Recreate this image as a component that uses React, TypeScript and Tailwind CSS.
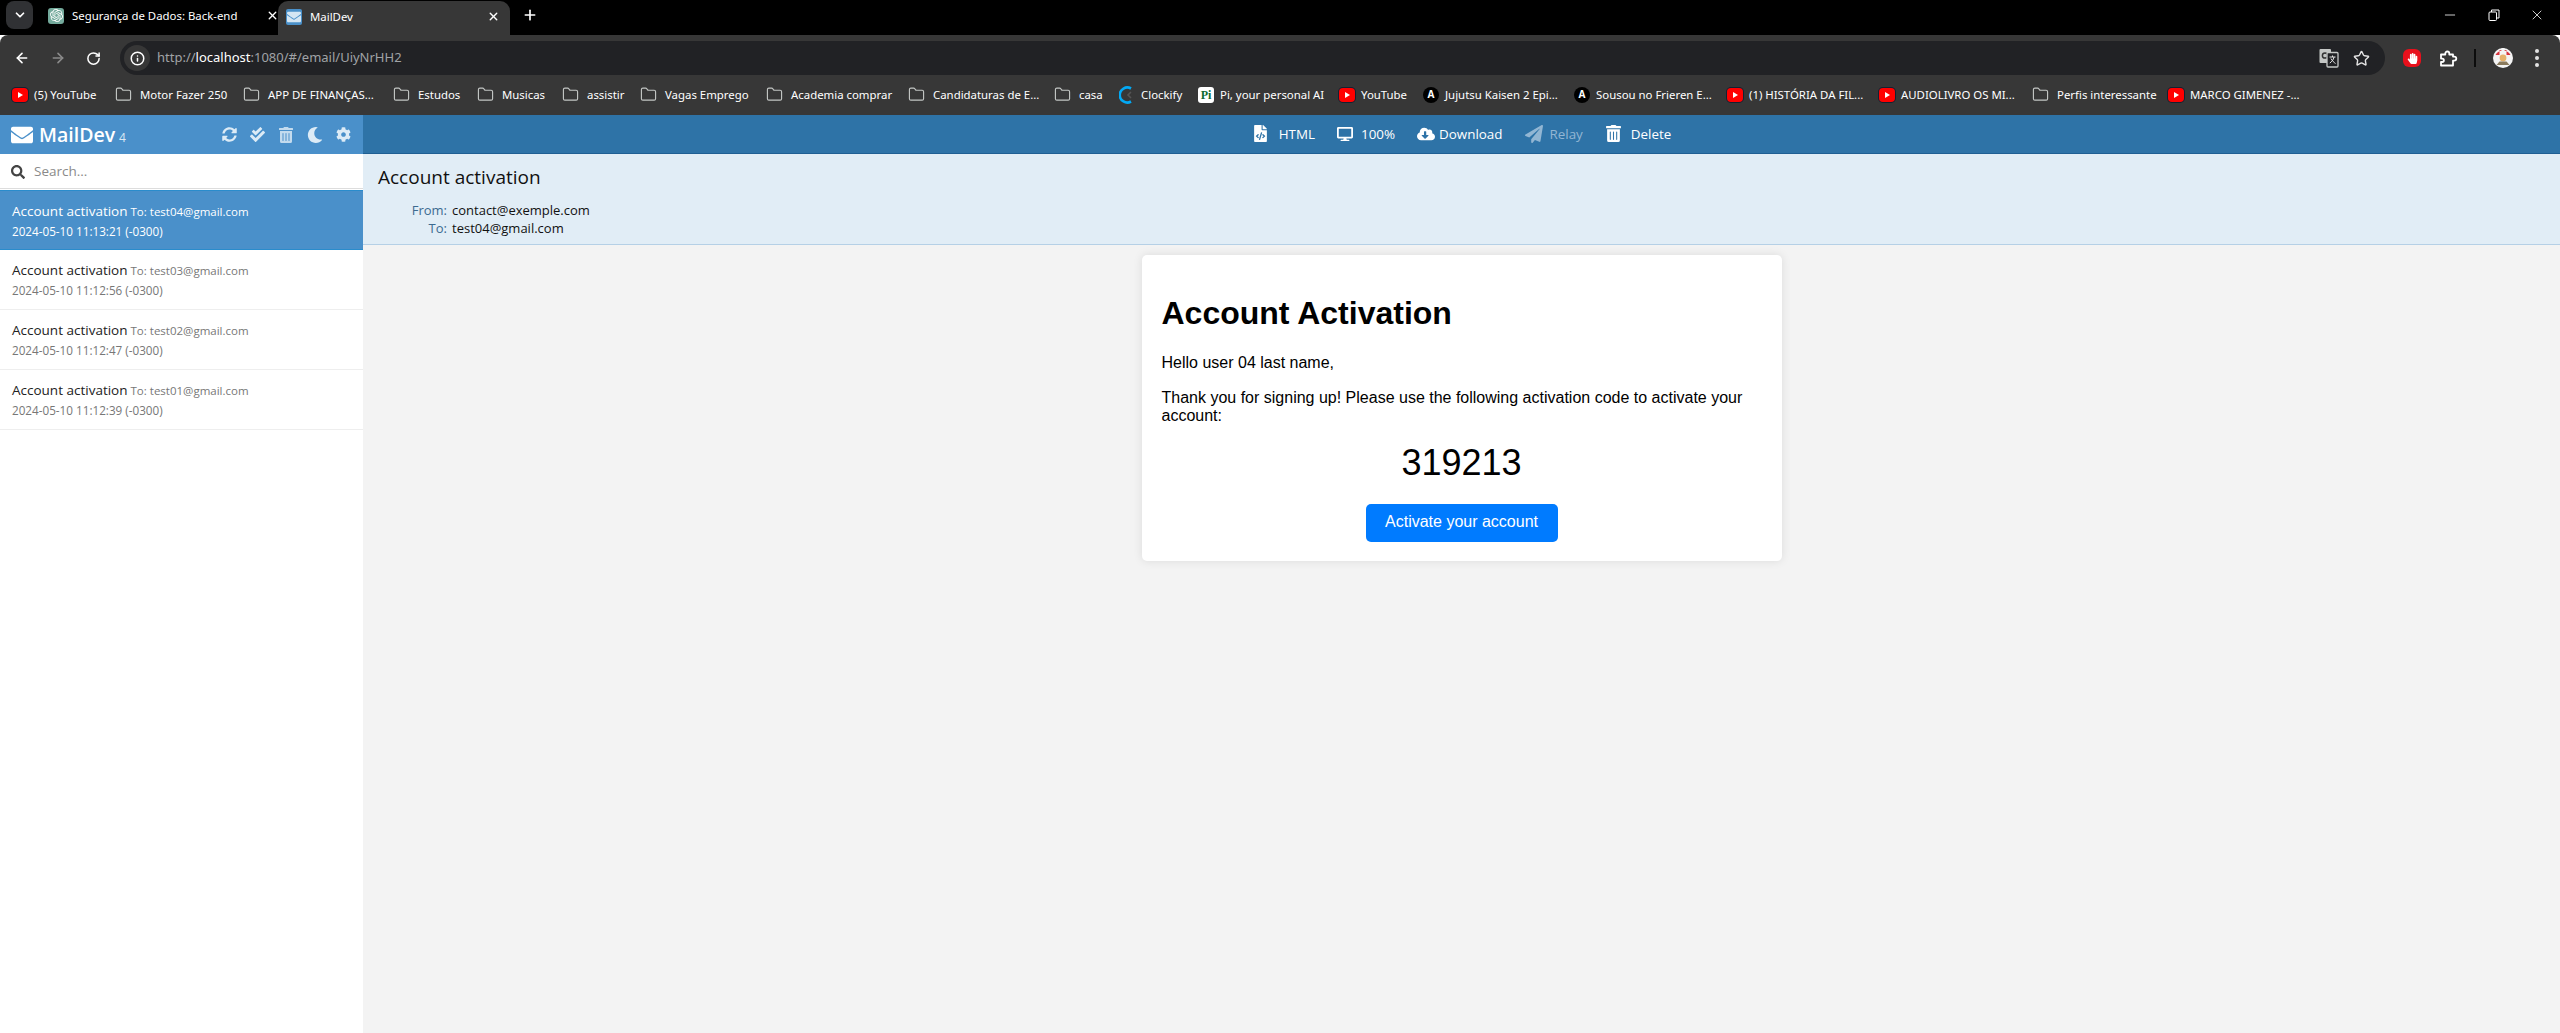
import React from "react";
import { FaEnvelope, FaSyncAlt, FaCheckDouble, FaTrashAlt, FaMoon, FaCog, FaSearch, FaFileCode, FaDesktop, FaCloudDownloadAlt, FaPaperPlane, FaHandPaper } from "react-icons/fa";
import { SiOpenai } from "react-icons/si";
import { ChevronDown, X, Plus, ArrowLeft, ArrowRight, RotateCw, Info, Minus, Folder, Star } from "lucide-react";

const YT = () => (
  <span className="flex h-[14px] w-[16px] shrink-0 items-center justify-center rounded-[4px] bg-[#f00] ring-1 ring-[#123]">
    <svg width="6" height="6" viewBox="0 0 6 6"><path d="M1 0 L6 3 L1 6Z" fill="#fff" /></svg>
  </span>
);
const Fold = () => <Folder size={17} strokeWidth={1.6} className="mr-[2px] shrink-0 text-[#c4c7c5]" />;
const Anime = () => (
  <span className="flex h-[16px] w-[16px] shrink-0 items-center justify-center rounded-full bg-black text-[10px] font-bold text-white">A</span>
);
const Clock = () => (
  <svg width="16" height="18" viewBox="0 0 16 18" className="shrink-0">
    <path d="M12 2.5 A7.5 7.5 0 1 0 12 15.5" fill="none" stroke="#03a9f4" strokeWidth="2.6" />
    <path d="M12 6 L9 9 L12 12" fill="none" stroke="#555" strokeWidth="1.6" />
  </svg>
);
const Pi = () => (
  <span className="flex h-[16px] w-[16px] shrink-0 items-center justify-center rounded-[3px] bg-white font-['Liberation_Serif',serif] text-[12px] font-bold text-[#0d6b2f]">Pi</span>
);

const marks = [
  { i: <YT />, t: "(5) YouTube", w: "w-[103px]" },
  { i: <Fold />, t: "Motor Fazer 250", w: "w-[128px]" },
  { i: <Fold />, t: "APP DE FINANÇAS...", w: "w-[150px]" },
  { i: <Fold />, t: "Estudos", w: "w-[84px]" },
  { i: <Fold />, t: "Musicas", w: "w-[85px]" },
  { i: <Fold />, t: "assistir", w: "w-[78px]" },
  { i: <Fold />, t: "Vagas Emprego", w: "w-[126px]" },
  { i: <Fold />, t: "Academia comprar", w: "w-[142px]" },
  { i: <Fold />, t: "Candidaturas de E...", w: "w-[146px]" },
  { i: <Fold />, t: "casa", w: "w-[65px]" },
  { i: <Clock />, t: "Clockify", w: "w-[79px]" },
  { i: <Pi />, t: "Pi, your personal AI", w: "w-[141px]" },
  { i: <YT />, t: "YouTube", w: "w-[84px]" },
  { i: <Anime />, t: "Jujutsu Kaisen 2 Epi...", w: "w-[151px]" },
  { i: <Anime />, t: "Sousou no Frieren E...", w: "w-[153px]" },
  { i: <YT />, t: "(1) HISTÓRIA DA FIL...", w: "w-[152px]" },
  { i: <YT />, t: "AUDIOLIVRO OS MI...", w: "w-[153px]" },
  { i: <Fold />, t: "Perfis interessante", w: "w-[136px]" },
  { i: <YT />, t: "MARCO GIMENEZ -...", w: "w-[140px]" },
];

const emails = [
  { to: "test04@gmail.com", d: "2024-05-10 11:13:21 (-0300)", sel: true },
  { to: "test03@gmail.com", d: "2024-05-10 11:12:56 (-0300)", sel: false },
  { to: "test02@gmail.com", d: "2024-05-10 11:12:47 (-0300)", sel: false },
  { to: "test01@gmail.com", d: "2024-05-10 11:12:39 (-0300)", sel: false },
];

function Chrome() {
  return (
    <div className="shrink-0 font-['Noto_Sans',sans-serif] text-white">
      <div className="flex h-[35px] items-center bg-black">
        <div className="mb-[6px] ml-[6px] flex h-[28px] w-[27px] items-center justify-center rounded-[8px] bg-[#303134]">
          <ChevronDown size={14} strokeWidth={3} />
        </div>
        <div className="mb-[3px] ml-[15px] flex w-[230px] items-center">
          <span className="flex h-[16px] w-[16px] items-center justify-center rounded-[3px] bg-[#74aa9c]"><SiOpenai size={13} className="text-white" /></span>
          <span className="ml-[8px] text-[11.4px]">Segurança de Dados: Back-end</span>
          <X size={13} strokeWidth={2.5} className="ml-auto mr-[-1px]" />
        </div>
        <div className="flex h-[34px] w-[232px] items-center self-end rounded-t-[10px] bg-[#373737] pb-[3px] pl-[8px] pr-[10px]">
          <span className="flex h-[16px] w-[16px] items-center justify-center rounded-[2px] bg-[#4a90c9]"><FaEnvelope size={14} className="text-[#d5e6f3]" /></span>
          <span className="ml-[8px] text-[11.4px]">MailDev</span>
          <X size={13} strokeWidth={2.5} className="ml-auto" />
        </div>
        <Plus size={16} strokeWidth={2.5} className="mb-[5px] ml-[12px]" />
        <div className="mb-[5px] ml-auto flex items-center">
          <Minus size={16} strokeWidth={1.2} className="mr-[30px]" />
          <svg width="12" height="12" viewBox="0 0 12 12" className="mr-[29px]" fill="none" stroke="#fff"><rect x="1" y="3" width="7.5" height="8.5" rx="1" /><path d="M3.5 3 V1 H11 V9 H8.5" /></svg>
          <X size={16} strokeWidth={1.2} className="mr-[15px]" />
        </div>
      </div>
      <div className="flex h-[40px] rounded-t-[8px] bg-[#373737]">
        <div className="flex w-[120px] items-center pl-[14px] pt-[6px]">
          <ArrowLeft size={16} strokeWidth={2.4} />
          <ArrowRight size={16} strokeWidth={2.4} className="ml-[20px] text-[#8b8b8b]" />
          <RotateCw size={15} strokeWidth={2.4} className="ml-[20px]" />
        </div>
        <div className="mt-[6px] flex h-[34px] w-[2265px] items-center rounded-full bg-[#212225] pl-[4px] pr-[15px]">
          <span className="flex h-[26px] w-[26px] items-center justify-center rounded-full bg-[#373737]"><Info size={15} strokeWidth={2.4} /></span>
          <span className="ml-[7px] text-[13px] text-[#a0a3a6]">http://<span className="text-white">localhost</span>:1080/#/email/UiyNrHH2</span>
          <svg width="20" height="20" viewBox="0 0 20 20" className="ml-auto">
            <rect x="0.5" y="1" width="11.5" height="14" rx="1" fill="#c4c7c5" />
            <circle cx="6" cy="7.5" r="2.6" fill="none" stroke="#333" strokeWidth="1.5" />
            <rect x="8" y="4.5" width="11" height="14.5" rx="1" fill="#212225" stroke="#c4c7c5" strokeWidth="1.3" />
            <path d="M10.5 9 H16.5 M13.5 7.5 V9 M15 9 C14.5 12 12.5 14 10.8 15 M12 10.5 C13 12.5 15 14.5 16.5 15.5" stroke="#e3e3e3" strokeWidth="1" fill="none" />
          </svg>
          <Star size={17} strokeWidth={2} className="ml-[14px] text-[#e3e3e3]" />
        </div>
        <div className="flex flex-1 items-center pt-[6px]">
          <span className="ml-[18px] flex h-[18px] w-[18px] items-center justify-center rounded-[6px] bg-[#e8101c]"><FaHandPaper size={11} className="text-white" /></span>
          <svg width="19" height="17" viewBox="0 0 19 17" className="ml-[18px]" fill="none" stroke="#fff" strokeWidth="1.8" strokeLinejoin="round">
            <path d="M2 4.5 H6.3 V3.5 A2 2 0 0 1 10.3 3.5 V4.5 H14 V6.6 H15.3 A2 2 0 0 1 15.3 10.6 H14 V15.5 H2 V12 H3.2 A1.7 1.7 0 0 0 3.2 8.6 H2 Z" />
          </svg>
          <span className="ml-[16px] h-[18px] w-[2px] bg-[#0c0c0c]" />
          <svg width="20" height="22" viewBox="0 0 20 22" className="ml-[17px]">
            <circle cx="10" cy="11" r="10" fill="#f4f4f4" />
            <path d="M2.5 8 A8.5 8.5 0 0 1 17.5 8 L13.5 8 L13.5 3 L6.5 3 L6.5 8Z" fill="#d8323c" />
            <rect x="8.5" y="1" width="3" height="5" fill="#f4f4f4" />
            <circle cx="10" cy="11" r="3.4" fill="#e6b26c" />
            <path d="M3.5 18 L16.5 18 L13.5 14.5 L6.5 14.5Z" fill="#8a7a5c" />
          </svg>
          <div className="ml-[22px] flex flex-col gap-[3px]">
            <span className="h-[4px] w-[4px] rounded-full bg-[#e3e3e3]" />
            <span className="h-[4px] w-[4px] rounded-full bg-[#e3e3e3]" />
            <span className="h-[4px] w-[4px] rounded-full bg-[#e3e3e3]" />
          </div>
        </div>
      </div>
      <div className="flex h-[40px] items-center bg-[#373737] pl-[12px] text-[11.4px]">
        {marks.map((m) => (
          <div key={m.t} className={`${m.w} flex shrink-0 items-center gap-[6px] whitespace-nowrap`}>
            {m.i}
            <span>{m.t}</span>
          </div>
        ))}
      </div>
    </div>
  );
}

function Sidebar() {
  return (
    <aside className="flex w-[363px] shrink-0 flex-col bg-white">
      <div className="flex h-[39px] items-center bg-[#4a90ca] pl-[11px] text-white">
        <FaEnvelope size={22} />
        <span className="ml-[6px] text-[19.5px] font-semibold leading-none">MailDev</span>
        <span className="ml-[4px] mt-[6px] text-[12px] leading-none text-[#dbe9f4]">4</span>
        <div className="ml-auto mr-[12px] flex items-center gap-[13px] text-[#dcebf6]">
          <FaSyncAlt size={15} />
          <FaCheckDouble size={15} />
          <FaTrashAlt size={16} className="text-[#c3dbee]" />
          <FaMoon size={16} />
          <FaCog size={15} />
        </div>
      </div>
      <div className="flex h-[35px] items-center border-b border-[#dddddd] pl-[11px] pt-[1px] text-[13.5px] text-[#8a8a8a]">
        <FaSearch size={14} className="text-[#444]" />
        <span className="ml-[9px]">Search...</span>
      </div>
      <div className="mt-[1px]">
        {emails.map((e) => (
          <div key={e.to} className={e.sel ? "h-[60px] border-y border-[#2a8ccc] bg-[#4a90ca] pl-[12px] pt-[9px] text-white" : "h-[60px] border-b border-[#eeeeee] pl-[12px] pt-[9px]"}>
            <div className="whitespace-nowrap leading-[20px]">
              <span className={e.sel ? "text-[13.5px]" : "text-[13.5px] text-[#222]"}>Account activation</span>
              <span className={e.sel ? "ml-[3px] text-[11.5px]" : "ml-[3px] text-[11.5px] text-[#777]"}>To: {e.to}</span>
            </div>
            <div className={e.sel ? "text-[11.7px] leading-[18px]" : "text-[11.7px] leading-[18px] text-[#777]"}>{e.d}</div>
          </div>
        ))}
      </div>
    </aside>
  );
}

function Action({ icon, label, cls }: { icon: React.ReactNode; label: string; cls: string }) {
  return (
    <div className={`flex items-center text-[13.4px] ${cls}`}>
      {icon}
      <span>{label}</span>
    </div>
  );
}

function Main() {
  return (
    <main className="flex min-w-0 flex-1 flex-col bg-[#f3f3f3]">
      <div className="flex h-[39px] items-center justify-center gap-[22px] border-b border-[#1f5f93] bg-[#2e73a7]">
        <Action icon={<FaFileCode size={17} />} label="HTML" cls="gap-[10px] text-white" />
        <Action icon={<FaDesktop size={16} />} label="100%" cls="gap-[8px] text-white" />
        <Action icon={<FaCloudDownloadAlt size={18} />} label="Download" cls="gap-[4px] text-white" />
        <Action icon={<FaPaperPlane size={18} />} label="Relay" cls="gap-[7px] text-[#92b6d3]" />
        <Action icon={<FaTrashAlt size={17} />} label="Delete" cls="gap-[9px] text-white" />
      </div>
      <div className="h-[91px] border-b border-[#b5d0e6] bg-[#e1edf6] pl-[15px] pt-[10px] text-[#111]">
        <div className="text-[19px] leading-[26px]">Account activation</div>
        <div className="mt-[11px] grid grid-cols-[69px_auto] justify-start gap-x-[5px] text-[13px] leading-[18px]">
          <span className="text-right text-[#3c6a90]">From:</span><span>contact@exemple.com</span>
          <span className="text-right text-[#3c6a90]">To:</span><span>test04@gmail.com</span>
        </div>
      </div>
      <div className="flex justify-center pt-[10px]">
        <div className="h-[306px] w-[640px] rounded-[5px] bg-white p-[20px] font-['Liberation_Sans',sans-serif] text-[16px] leading-[18.5px] text-black shadow-[0_0_10px_rgba(0,0,0,0.1)]">
          <h1 className="mt-[20px] text-[32px] font-bold leading-[37px]">Account Activation</h1>
          <p className="mt-[22px]">Hello user 04 last name,</p>
          <p className="mt-[16px]">Thank you for signing up! Please use the following activation code to activate your account:</p>
          <div className="mt-[16px] text-center text-[36px] leading-[41px]">319213</div>
          <div className="mt-[21px] flex justify-center">
            <span className="flex h-[38px] w-[192px] items-center justify-center rounded-[5px] bg-[#007bff] text-white">Activate your account</span>
          </div>
        </div>
      </div>
    </main>
  );
}

export default function App() {
  return (
    <div className="flex h-[1033px] w-[2560px] flex-col overflow-hidden bg-white">
      <Chrome />
      <div className="flex min-h-0 flex-1 font-['Open_Sans',sans-serif]">
        <Sidebar />
        <Main />
      </div>
    </div>
  );
}
